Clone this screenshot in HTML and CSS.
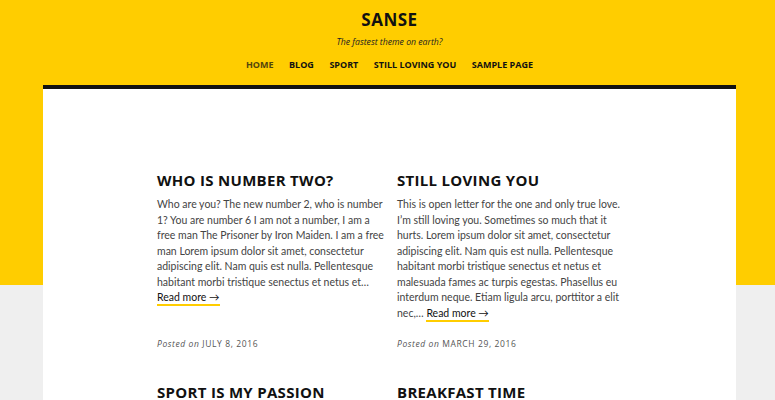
FILE: index.html
```html
<!DOCTYPE html>
<html lang="en">
<head>
  <meta charset="UTF-8">
  <meta name="viewport" content="width=device-width, initial-scale=1.0">
  <title>Sanse</title>
  <link rel="stylesheet" href="styles.css">
</head>
<body>
  <header class="site-header">
    <h1 class="site-title">SANSE</h1>
    <p class="site-tagline">The fastest theme on earth?</p>
    <nav class="menu">
      <a href="#" class="active">Home</a>
      <a href="#">Blog</a>
      <a href="#">Sport</a>
      <a href="#">Still loving you</a>
      <a href="#">Sample Page</a>
    </nav>
  </header>

  <main class="container">
    <div class="posts">
      <article class="post">
        <h2 class="post-title">Who is number two?</h2>
        <p class="post-excerpt">Who are you? The new number 2, who is number 1? You are number 6 I am not a number, I am a free man The Prisoner by Iron Maiden. I am a free man Lorem ipsum dolor sit amet, consectetur adipiscing elit. Nam quis est nulla. Pellentesque habitant morbi tristique senectus et netus et&hellip; <a href="#" class="read-more">Read more &rarr;</a></p>
        <p class="post-meta"><em>Posted on</em> July 8, 2016</p>
      </article>

      <article class="post">
        <h2 class="post-title">Still loving you</h2>
        <p class="post-excerpt">This is open letter for the one and only true love. I&rsquo;m still loving you. Sometimes so much that it hurts. Lorem ipsum dolor sit amet, consectetur adipiscing elit. Nam quis est nulla. Pellentesque habitant morbi tristique senectus et netus et malesuada fames ac turpis egestas. Phasellus eu interdum neque. Etiam ligula arcu, porttitor a elit nec,&hellip; <a href="#" class="read-more">Read more &rarr;</a></p>
        <p class="post-meta"><em>Posted on</em> March 29, 2016</p>
      </article>

      <article class="post">
        <h2 class="post-title">Sport is my passion</h2>
      </article>

      <article class="post">
        <h2 class="post-title">Breakfast time</h2>
      </article>
    </div>
  </main>
</body>
</html>
```

FILE: styles.css
```css
body {
  font-family: "Open Sans", "Noto Sans", sans-serif;
  margin: 0;
  padding: 0;
  color: #111;
  background: linear-gradient(#ffcd00 285px, #efefef 285px);
}
.site-header {
  text-align: center;
  padding-top: 9px;
  padding-left: 4px;
}
.site-title {
  margin: 0;
  font-size: 17px;
  line-height: 22px;
  font-weight: 700;
  letter-spacing: 0.5px;
}
.site-tagline {
  margin: 5px 0 0;
  font-size: 8.7px;
  font-style: italic;
  line-height: 12px;
  color: #222;
}
.menu {
  display: flex;
  justify-content: center;
  gap: 15.5px;
  margin-top: 11px;
}
.menu a {
  font-size: 9px;
  font-weight: 700;
  line-height: 12px;
  text-transform: uppercase;
  text-decoration: none;
  color: #111;
}
.menu a.active {
  color: #54450c;
}
.container {
  width: 693px;
  margin: 14px 0 0 43px;
  background-color: #fff;
  border-top: 4px solid #111;
  min-height: 400px;
}
.posts {
  display: grid;
  grid-template-columns: 228px 228px;
  column-gap: 12px;
  row-gap: 32px;
  padding: 81px 0 0 114px;
}
.post {
  display: flex;
  flex-direction: column;
}
.post-title {
  margin: 0;
  font-size: 15px;
  line-height: 20px;
  font-weight: 700;
  text-transform: uppercase;
  letter-spacing: 0.3px;
}
.post-excerpt {
  margin: 7px 0 0;
  font-family: Lato, "Open Sans", sans-serif;
  font-size: 10.5px;
  line-height: 15.5px;
  color: #444;
}
.read-more {
  color: #111;
  text-decoration: none;
  border-bottom: 2px solid #ffcd00;
  padding-bottom: 1px;
}
.post-meta {
  margin: auto 0 0;
  padding-top: 17px;
  font-size: 8.5px;
  line-height: 12px;
  letter-spacing: 0.6px;
  text-transform: uppercase;
  color: #555;
}
.post-meta em {
  text-transform: none;
}
```
